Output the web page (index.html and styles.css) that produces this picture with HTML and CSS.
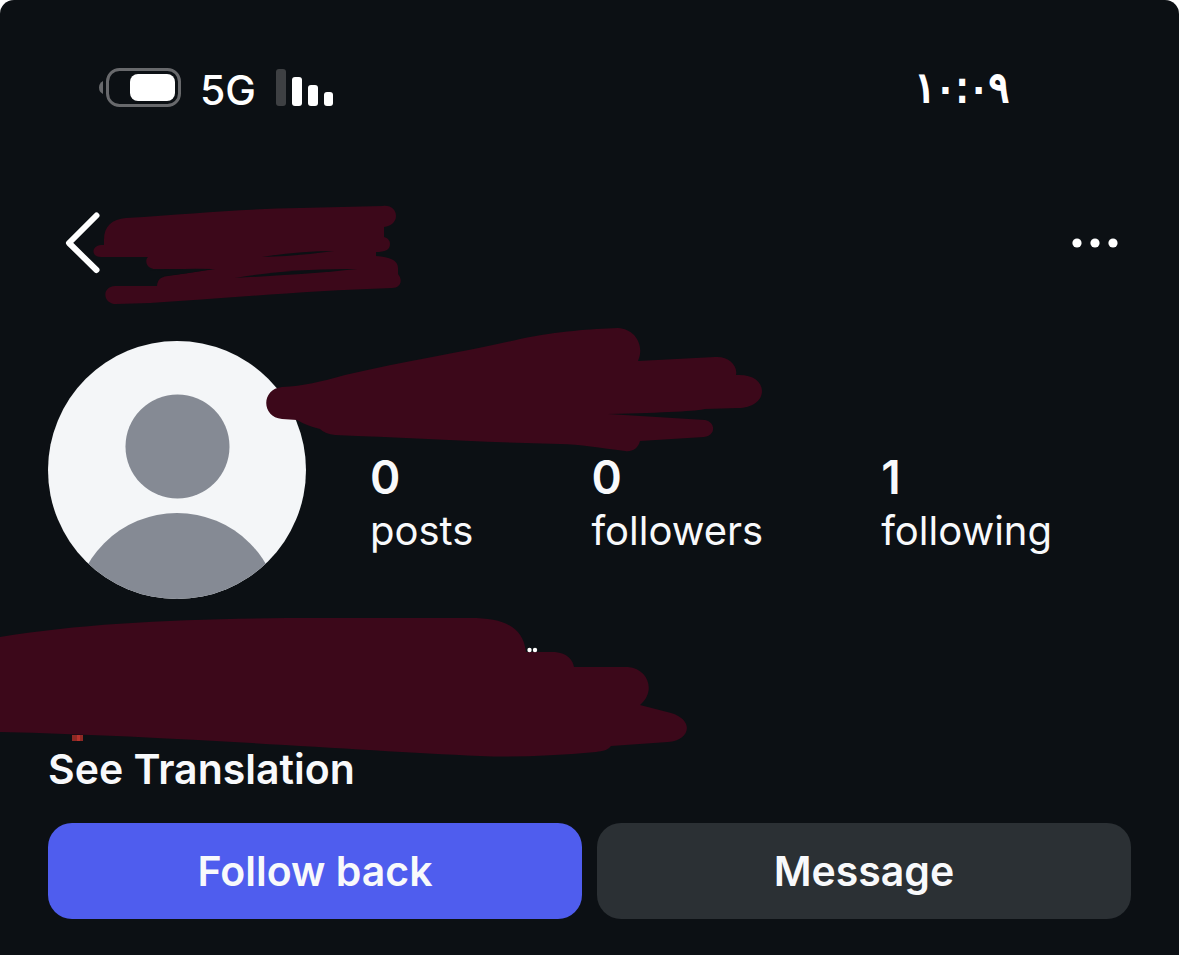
FILE: index.html
```html
<!DOCTYPE html>
<html lang="en">
<head>
  <meta charset="UTF-8" />
  <meta name="viewport" content="width=device-width, initial-scale=1.0"/>
  <title>Profile</title>
  <link rel="stylesheet" href="styles.css">
</head>
<body>

<div class="screen">
  <div class="status-bar">
    <div class="status-icons">
      <svg class="battery" width="82" height="40" viewBox="99 68 82 40" aria-hidden="true">
        <path d="M103 81 Q99 83 99 87.500 Q99 92 103 94 Z" fill="#68696c"/>
        <rect x="107.500" y="69.500" width="72" height="36" rx="12" fill="none" stroke="#68696c" stroke-width="3"/>
        <rect x="130" y="74" width="45" height="27" rx="8" fill="#fff"/>
      </svg>
      <span class="network">5G</span>
      <svg class="signal" width="58" height="38" viewBox="275 69 58 38" aria-hidden="true">
        <rect x="276" y="69" width="10" height="37" rx="3" fill="#3e4043"/>
        <rect x="292" y="77" width="10" height="29" rx="3" fill="#fff"/>
        <rect x="308" y="85" width="10" height="21" rx="3" fill="#fff"/>
        <rect x="324" y="92" width="9" height="14" rx="3" fill="#fff"/>
      </svg>
    </div>
    <span class="time">١٠:٠٩</span>
  </div>

  <header class="top-bar">
    <button class="icon-btn" type="button" aria-label="Back">
      <svg width="36" height="62" viewBox="65 212 36 62">
        <path d="M96.500 215.500 L69 243 L96.500 270" fill="none" stroke="#fff" stroke-width="6" stroke-linecap="round" stroke-linejoin="round"/>
      </svg>
    </button>
    <button class="icon-btn" type="button" aria-label="More options">
      <svg width="46" height="10" viewBox="1072 238 46 10">
        <circle cx="1077" cy="243" r="4.600" fill="#fff"/>
        <circle cx="1095" cy="243" r="4.600" fill="#fff"/>
        <circle cx="1113" cy="243" r="4.600" fill="#fff"/>
      </svg>
    </button>
    <svg class="scribble scribble-username" width="320" height="110" viewBox="90 200 320 110" aria-hidden="true">
      <path fill="#3c081a" d="M104 240 C104 226 112 219 126 218 C190 214 240 209 300 208 L383 206 C391 205 396 210 396 216 C396 222 391 226 384 227 L384 237 C388 238 390 241 390 244 C390 250 385 252 376 252 L376 256 C390 257 398 260 398 268 L398 274 C403 280 401 288 392 288 C300 291 220 299 150 303 L116 304 C103 304 101 287 115 286 L157 286 C157 277 165 276 175 275 L215 269 L156 269 C145 269 145 259 148 257 L101 257 C91 257 91 246 101 245 L104 245 Z"/>
      <path fill="#0c1014" d="M262 257 Q300 251 334 251 Q300 256 262 257 Z"/>
      <path fill="#0c1014" d="M150 271 Q180 268 212 269 Q185 274 164 276 Q157 278 157 284 L150 284 Z"/>
      <path fill="#0c1014" d="M235 278 Q290 268 357 269 Q310 274 235 278 Z"/>
    </svg>
  </header>

  <main class="profile">
    <section class="summary">
      <svg class="avatar" width="258" height="258" viewBox="0 0 258 258" role="img" aria-label="Profile picture">
        <defs>
          <clipPath id="avatar-clip"><circle cx="129" cy="129" r="129"/></clipPath>
        </defs>
        <g clip-path="url(#avatar-clip)">
          <rect width="258" height="258" fill="#f4f6f8"/>
          <circle cx="129.500" cy="105.500" r="52" fill="#858a94"/>
          <circle cx="129" cy="275" r="103" fill="#858a94"/>
        </g>
      </svg>
      <ul class="stats">
        <li><strong>0</strong><span>posts</span></li>
        <li><strong>0</strong><span>followers</span></li>
        <li><strong>1</strong><span>following</span></li>
      </ul>
      <svg class="scribble scribble-name" width="500" height="130" viewBox="265 325 500 130" aria-hidden="true">
        <path fill="#3c081a" d="M282 387 C304 386 320 382 345 375 C410 360 470 351 520 339 C560 331 590 329 618 328 C635 329 645 345 638 361 L715 357 C729 356 738 366 736 375 C752 374 762 381 762 391 C762 401 752 408 738 408 L705 409 Q695 412 608 414 L705 420 C716 422 716 436 704 437 L640 441 C638 449 632 452 625 451 C600 448 580 444 560 444 C480 442 410 438 335 435 Q325 434 320 429 Q307 426 297 420 L282 419 C261 417 261 389 282 387 Z"/>
      </svg>
    </section>

    <section class="bio">
      <svg class="scribble scribble-bio" width="700" height="150" viewBox="0 610 700 150" aria-hidden="true">
        <path fill="#3c081a" d="M0 637 C90 622 200 618 320 618 L470 618 C505 618 523 627 526 652 L555 652 C567 653 573 660 574 667 L628 667 C649 669 656 692 640 705 L671 713 C695 720 690 741 668 742 L611 746 C608 750 603 751 596 752 Q530 758 480 756 C350 750 170 736 0 732 Z"/>
        <circle cx="529.500" cy="650" r="2.200" fill="#fff"/>
        <circle cx="535" cy="650" r="2.200" fill="#fff"/>
        <rect x="72" y="735" width="11" height="6" fill="#8e2824"/>
        <rect x="77" y="735" width="3" height="6" fill="#b5322c"/>
      </svg>
      <a class="translate" href="#">See Translation</a>
    </section>

    <div class="actions">
      <button class="btn btn-primary" type="button">Follow back</button>
      <button class="btn" type="button">Message</button>
    </div>
  </main>
</div>

</body>
</html>
```
FILE: styles.css
```css
* {
  box-sizing: border-box;
}

body {
  margin: 0;
  background-color: #fff;
  font-family: Inter, "Noto Sans", sans-serif;
  color: #f8f9fb;
}

.screen {
  min-height: 100vh;
  background-color: #0c1014;
  border-radius: 14px 14px 0 0;
  overflow: hidden;
}

.status-bar {
  display: flex;
  justify-content: space-between;
  align-items: center;
  height: 176px;
  padding: 0 170px 0 99px;
  color: #fff;
}

.status-icons {
  display: flex;
  align-items: center;
  gap: 19px;
}

.network {
  padding-top: 4px;
  font-size: 41px;
  line-height: 48px;
  font-weight: 500;
}

.time {
  font-family: "DejaVu Sans Condensed", "DejaVu Sans", sans-serif;
  font-size: 42px;
  line-height: 48px;
  -webkit-text-stroke: 2px #fff;
}

.top-bar {
  position: relative;
  display: flex;
  justify-content: space-between;
  align-items: center;
  height: 134px;
  padding: 0 61px 0 65px;
}

.icon-btn {
  display: flex;
  padding: 0;
  border: none;
  background: none;
  cursor: pointer;
}

/* marker strokes lying over the private details */
.scribble {
  position: absolute;
  pointer-events: none;
}

.scribble-username {
  left: 90px;
  top: 24px;
}

.profile {
  padding: 31px 48px 36px;
}

.summary {
  position: relative;
  display: flex;
  align-items: flex-end;
  gap: 64px;
}

.avatar {
  flex: none;
}

.stats {
  display: flex;
  gap: 118px;
  margin: 0;
  padding: 0 0 41px;
  list-style: none;
}

.stats li {
  display: flex;
  flex-direction: column;
  line-height: 54px;
}

.stats strong {
  font-size: 46px;
  font-weight: 600;
}

.stats span {
  font-size: 40px;
}

.scribble-name {
  left: 217px;
  top: -16px;
}

.bio {
  position: relative;
  display: flex;
  padding-top: 143px;
}

.scribble-bio {
  left: -48px;
  top: 11px;
}

.translate {
  position: relative;
  color: inherit;
  font-size: 41px;
  line-height: 54px;
  font-weight: 600;
  text-decoration: none;
}

.actions {
  display: flex;
  gap: 15px;
  margin-top: 27px;
}

.btn {
  flex: 1;
  height: 96px;
  border: none;
  border-radius: 24px;
  background-color: #2b3034;
  color: #f8f9fb;
  font-family: inherit;
  font-size: 41px;
  font-weight: 600;
  cursor: pointer;
}

.btn-primary {
  background-color: #4f5dee;
}
```
